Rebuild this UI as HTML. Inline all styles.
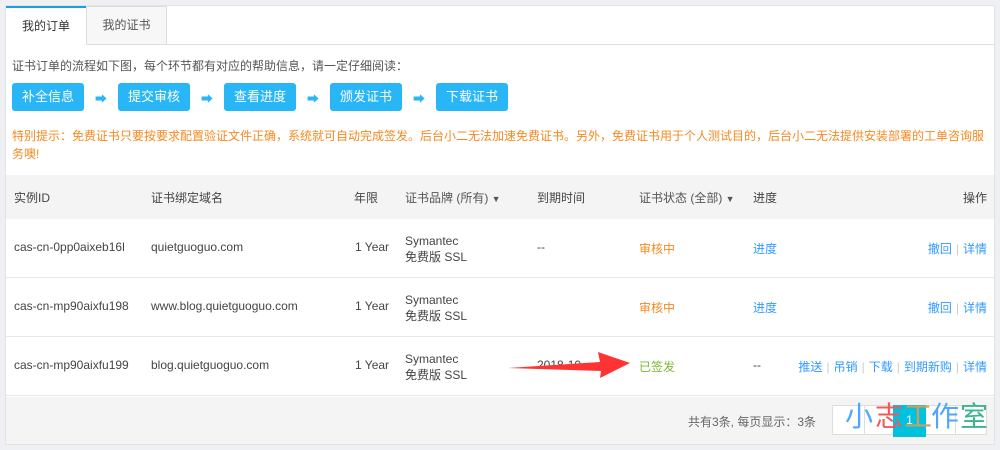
<!DOCTYPE html>
<html><head><meta charset="utf-8"><style>
*{margin:0;padding:0;box-sizing:border-box}
body{width:1000px;height:450px;background:#eef0f3;font-family:"Liberation Sans","Noto Sans CJK SC",sans-serif;font-size:12px;color:#444;position:relative;overflow:hidden}
.panel{position:absolute;left:5px;top:5px;width:990px;height:440px;background:#fff;border:1px solid #e3e3e3}
.a{position:absolute;white-space:nowrap}
.btn{position:absolute;top:83px;height:28px;width:72px;background:#29b6f6;color:#fff;border-radius:3px;font-size:13px;text-align:center;line-height:28px}
.arr{position:absolute;top:90px;color:#29b6f6;font-size:12px}
.hd{position:absolute;left:6px;width:988px;top:175px;height:44px;background:#f4f4f4}
.row{position:absolute;left:6px;width:988px;height:59px;border-bottom:1px solid #e8e8e8}
.blue{color:#39f}
.or{color:#f5891f}
.sep{color:#ccc;margin:0 4px}
.w{position:absolute;top:399px;font-size:28px;line-height:36px}
</style></head><body>
<div class="panel"></div>
<div class="a" style="left:6px;top:6px;width:80px;height:40px;border-top:2px solid #1ba1d8;background:#fff;text-align:center;line-height:36px;font-size:12px;color:#333">我的订单</div>
<div class="a" style="left:86px;top:6px;width:81px;height:39px;border:1px solid #ddd;background:#f7f7f7;text-align:center;line-height:37px;color:#555">我的证书</div>
<div class="a" style="left:167px;top:44px;width:827px;border-top:1px solid #ddd"></div>
<div class="a" style="left:12px;top:57px;color:#555">证书订单的流程如下图，每个环节都有对应的帮助信息，请一定仔细阅读：</div>
<div class="btn" style="left:12px">补全信息</div><div class="arr" style="left:95px">➡</div>
<div class="btn" style="left:118px">提交审核</div><div class="arr" style="left:201px">➡</div>
<div class="btn" style="left:224px">查看进度</div><div class="arr" style="left:307px">➡</div>
<div class="btn" style="left:330px">颁发证书</div><div class="arr" style="left:413px">➡</div>
<div class="btn" style="left:436px">下载证书</div>
<div class="a or" style="left:12px;top:127px;line-height:18px;white-space:normal;width:980px">特别提示：免费证书只要按要求配置验证文件正确，系统就可自动完成签发。后台小二无法加速免费证书。另外，免费证书用于个人测试目的，后台小二无法提供安装部署的工单咨询服务噢!</div>
<div class="hd"></div>
<div class="a" style="left:14px;top:189px">实例ID</div>
<div class="a" style="left:151px;top:189px">证书绑定域名</div>
<div class="a" style="left:354px;top:189px">年限</div>
<div class="a" style="left:405px;top:189px;color:#555">证书品牌 (所有) <span style="font-size:9px">▼</span></div>
<div class="a" style="left:537px;top:189px">到期时间</div>
<div class="a" style="left:639px;top:189px;color:#555">证书状态 (全部) <span style="font-size:9px">▼</span></div>
<div class="a" style="left:753px;top:189px">进度</div>
<div class="a" style="left:963px;top:189px">操作</div>

<div class="row" style="top:219px"></div>
<div class="row" style="top:278px"></div>
<div class="row" style="top:337px"></div>

<div class="a" style="left:14px;top:240px">cas-cn-0pp0aixeb16l</div>
<div class="a" style="left:151px;top:240px">quietguoguo.com</div>
<div class="a" style="left:355px;top:240px">1 Year</div>
<div class="a" style="left:405px;top:233px;line-height:16px">Symantec<br>免费版 SSL</div>
<div class="a" style="left:537px;top:240px">--</div>
<div class="a or" style="left:639px;top:240px">审核中</div>
<div class="a blue" style="left:753px;top:240px">进度</div>
<div class="a blue" style="right:13px;top:240px">撤回<span class="sep">|</span>详情</div>

<div class="a" style="left:14px;top:299px">cas-cn-mp90aixfu198</div>
<div class="a" style="left:151px;top:299px">www.blog.quietguoguo.com</div>
<div class="a" style="left:355px;top:299px">1 Year</div>
<div class="a" style="left:405px;top:292px;line-height:16px">Symantec<br>免费版 SSL</div>
<div class="a or" style="left:639px;top:299px">审核中</div>
<div class="a blue" style="left:753px;top:299px">进度</div>
<div class="a blue" style="right:13px;top:299px">撤回<span class="sep">|</span>详情</div>

<div class="a" style="left:14px;top:358px">cas-cn-mp90aixfu199</div>
<div class="a" style="left:151px;top:358px">blog.quietguoguo.com</div>
<div class="a" style="left:355px;top:358px">1 Year</div>
<div class="a" style="left:405px;top:351px;line-height:16px">Symantec<br>免费版 SSL</div>
<div class="a" style="left:537px;top:358px">2018-10</div>
<svg class="a" style="left:505px;top:350px" width="130" height="30"><polygon points="3,18 95,12 93,2 125,13 95,28 96,21" fill="#f33"/></svg>
<div class="a" style="left:639px;top:358px;color:#7cb82f">已签发</div>
<div class="a" style="left:753px;top:358px">--</div>
<div class="a blue" style="right:13px;top:358px">推送<span class="sep">|</span>吊销<span class="sep">|</span>下载<span class="sep">|</span>到期新购<span class="sep">|</span>详情</div>

<div class="a" style="left:6px;top:397px;width:988px;height:47px;background:#f4f4f4"></div>
<div class="a" style="left:688px;top:413px;color:#666">共有3条, 每页显示：3条</div>
<div class="a" style="left:832px;top:405px;width:155px;height:30px;background:#fff;border:1px solid #ddd"></div>
<div class="a" style="left:864px;top:405px;height:30px;border-left:1px solid #ddd"></div>
<div class="a" style="left:955px;top:405px;height:30px;border-left:1px solid #ddd"></div>
<div class="a" style="left:893px;top:405px;width:33px;height:32px;background:#00c1de;color:#fff;text-align:center;line-height:30px">1</div>
<div class="w" style="left:845px;color:#4da6ff">小</div>
<div class="w" style="left:875px;color:#ef5a5a">志</div>
<div class="w" style="left:904px;color:#c8a060">工</div>
<div class="w" style="left:931px;color:#4da6ff">作</div>
<div class="w" style="left:960px;color:#3cb58c">室</div>
</body></html>
